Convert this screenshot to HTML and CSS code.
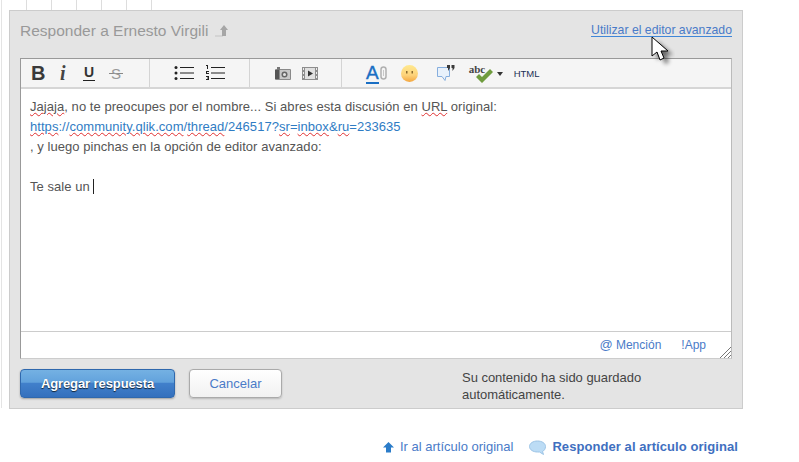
FILE: index.html

```html
<!DOCTYPE html>
<html lang="es">
<head>
  <meta charset="UTF-8">
  <title>Responder a Ernesto Virgili</title>
  <meta name="viewport" content="width=device-width, initial-scale=1.0">
  <link rel="stylesheet" href="styles.css">
</head>
<body>
  <div class="page">
    <div class="tabs">
      <span></span><span></span><span></span><span></span><span></span><span></span>
    </div>

    <div class="panel">
      <div class="panel-head">
        <h2>Responder a Ernesto Virgili
          <svg class="up-grey" width="14" height="12" viewBox="0 0 14 12"><path d="M1 10h8v2H1z" fill="#d4d4d4"/><path d="M10 0l4 5h-2v6H8V5H6z" fill="#a6a6a6"/></svg>
        </h2>
        <a class="advanced" href="#">Utilizar el editor avanzado</a>
      </div>

      <div class="editor">
        <div class="toolbar">
          <div class="tool-group group-text">
            <b class="t-bold">B</b>
            <i class="t-italic">i</i>
            <span class="t-under">U</span>
            <span class="t-strike">S</span>
          </div>
          <div class="tool-group group-list">
            <svg width="20" height="16" viewBox="0 0 20 16"><g fill="#222"><circle cx="2" cy="2.500" r="1.500"/><circle cx="2" cy="8" r="1.500"/><circle cx="2" cy="13.500" r="1.500"/><path d="M6 2h14v1H6zM6 7.500h14v1H6zM6 13h14v1H6z"/></g></svg>
            <svg width="20" height="16" viewBox="0 0 20 16"><g fill="#222"><path d="M1 0h2v4H2V1H1zM1 6h3v1H2v1h2v1H1V7h2V7H1zM1 11h3v4H1v-1h2v-.5H2v-1h1V12H1z"/><path d="M6 2h14v1H6zM6 7.500h14v1H6zM6 13h14v1H6z"/></g></svg>
          </div>
          <div class="tool-group group-media">
            <svg width="16" height="13" viewBox="0 0 16 13"><rect x="0" y="2" width="16" height="11" rx="1" fill="#8a8a8a"/><rect x="0" y="3" width="4" height="9" fill="#555"/><rect x="5" y="3" width="10" height="9" fill="#c8c8c8"/><circle cx="9.500" cy="7.500" r="3" fill="#666"/><circle cx="9.500" cy="7.500" r="1.500" fill="#e4e4e4"/><rect x="2" y="0" width="3" height="3" fill="#777"/></svg>
            <svg width="16" height="13" viewBox="0 0 16 13"><rect width="16" height="13" fill="#8e8e8e"/><rect x="3" y="1" width="10" height="11" fill="#e0e0e0"/><path d="M6 3.500l5 3-5 3z" fill="#333"/><path d="M1 1h1v2H1zM1 5h1v2H1zM1 9h1v2H1zM14 1h1v2h-1zM14 5h1v2h-1zM14 9h1v2h-1z" fill="#eee"/></svg>
          </div>
          <div class="tool-group group-extra">
            <span class="t-link">A</span>
            <svg class="clip" width="7" height="14" viewBox="0 0 7 14"><rect x="1" y="1" width="5" height="12" rx="2.500" fill="none" stroke="#b0b0b0" stroke-width="1.500"/><path d="M3.500 4v6" stroke="#c8c8c8"/></svg>
            <svg class="smiley" width="17" height="17" viewBox="0 0 17 17"><defs><linearGradient id="sm" x1="0" y1="0" x2="0" y2="1"><stop offset="0" stop-color="#ffe98f"/><stop offset=".6" stop-color="#fdd27a"/><stop offset="1" stop-color="#f3a63f"/></linearGradient></defs><circle cx="8.500" cy="8.500" r="8.500" fill="url(#sm)"/><rect x="5" y="6" width="1.500" height="2.500" fill="#8a6a30"/><rect x="10.500" y="6" width="1.500" height="2.500" fill="#8a6a30"/></svg>
            <svg class="quote" width="18" height="16" viewBox="0 0 18 16"><path d="M.5 2.500h12v9H9l-1 4-3-4H.5z" fill="#e8f1fb" stroke="#86aede"/><path d="M10 0h3v3l-2 3v-3h-1zM14.500 0h3v3l-2 3v-3h-1z" fill="#3a3a3a"/></svg>
            <span class="spell">
              <span class="spell-abc">abc</span>
              <svg class="check" width="18" height="14" viewBox="0 0 18 14"><path d="M1 8l3-3 3 3 8-8 3 3-11 11z" fill="#6f9c3e"/></svg>
              <svg class="caret-down" width="6" height="4" viewBox="0 0 6 4"><path d="M0 0h6L3 4z" fill="#333"/></svg>
            </span>
            <span class="t-html">HTML</span>
          </div>
        </div>

        <div class="body-text">
          <div><u class="typo">Jajaja</u>, no te preocupes por el nombre... Si abres esta discusión en <u class="typo">URL</u> original:</div>
          <div><a class="url" href="#"><u class="typo">https</u>://<u class="typo">community.qlik.com</u>/<u class="typo">thread</u>/246517?<u class="typo">sr</u>=<u class="typo">inbox</u>&amp;<u class="typo">ru</u>=233635</a></div>
          <div>, y luego pinchas en la opción de editor avanzado:</div>
          <div class="blank"></div>
          <div>Te sale un <span class="text-cursor"></span></div>
        </div>

        <div class="status">
          <a href="#"><span class="at">@</span> Mención</a>
          <a href="#">!App</a>
          <svg class="grip" width="11" height="11" viewBox="0 0 11 11"><path d="M0 11L11 0M4 11l7-7M8 11l3-3" stroke="#777" stroke-width="1"/></svg>
        </div>
      </div>

      <div class="actions">
        <button class="btn-primary">Agregar respuesta</button>
        <button class="btn-cancel">Cancelar</button>
        <p class="saved">Su contenido ha sido guardado automáticamente.</p>
      </div>
    </div>

    <div class="bottom-links">
      <a href="#">
        <svg width="11" height="11" viewBox="0 0 11 11"><path d="M5.500 0L11 5.500H8V10.500H3V5.500H0z" fill="#2b7cc9"/></svg>
        Ir al artículo original
      </a>
      <a class="reply-link" href="#">
        <svg width="17" height="15" viewBox="0 0 17 15"><path d="M8.500 1C13 1 16.500 3.300 16.500 6.500c0 2.500-1.500 4.300-3 5l1 3-4-2.500H8.500C4 12 .5 9.700.5 6.500S4 1 8.500 1z" fill="#bcdcf5" stroke="#9cc4e6"/></svg>
        Responder al artículo original
      </a>
    </div>

    <svg class="mouse" width="24" height="32" viewBox="0 0 24 32"><defs><filter id="ms" x="-50%" y="-50%" width="200%" height="200%"><feGaussianBlur stdDeviation="2"/></filter></defs><path d="M3 3v19l5-4 3 8 4-2-3-7h7z" fill="#000" opacity=".55" filter="url(#ms)" transform="translate(3 2)"/><path d="M1 1v19l5-4 3 8 4-2-3-7h7z" fill="#fff" stroke="#000" stroke-width="1"/></svg>
  </div>
</body>
</html>
```

FILE: styles.css

```css
* { box-sizing: border-box; }
html, body { margin: 0; padding: 0; background: #fff; }
body { font-family: "Liberation Sans", Arial, sans-serif; font-size: 13px; color: #444; overflow: hidden; }
a { color: #4a7bc8; text-decoration: none; }

.page { position: relative; width: 799px; height: 462px; padding-left: 9px; }
.page::before { content: ""; position: absolute; left: 1px; top: 0; width: 1px; height: 408px; background: #e4e4e4; }

.tabs { display: flex; height: 10px; padding-left: 17px; }
.tabs span { width: 25px; border-left: 1px solid #ddd; }
.tabs span:last-child { width: 1px; }

.panel { width: 734px; height: 399px; background: #e4e4e4; border: 1px solid #ccc; padding: 0 10px; }
.panel-head { display: flex; justify-content: space-between; height: 47px; padding-top: 9px; }
.panel-head h2 { margin: 1px 0 0; font-size: 15.500px; line-height: 20px; font-weight: normal; color: #999; }
.up-grey { vertical-align: -1px; margin-left: 1px; }
.advanced { font-size: 12.250px; line-height: 20px; height: 17px; border-bottom: 1px solid #3f86d8; }

.editor { position: relative; width: 712px; height: 301px; background: #fff; border: 1px solid #bbb; border-top-color: #999; border-left-color: #999; border-bottom-color: #ccc; }

.toolbar { display: flex; height: 30px; background: #f5f5f5; border-bottom: 2px solid #d6d6d6; }
.tool-group { display: flex; align-items: center; border-right: 1px solid #d4d4d4; height: 28px; }
.tool-group:last-child { border-right: 0; }
.group-text { width: 129px; padding-left: 10px; }
.group-list { width: 100px; padding-left: 24px; gap: 11px; }
.group-media { width: 92px; padding-left: 25px; gap: 11px; }
.group-extra { flex: 1; padding-left: 24px; }

.t-bold { width: 26px; font-size: 20px; color: #3a3a3a; }
.t-italic { width: 26px; font-family: "Liberation Serif", serif; font-size: 20px; font-weight: bold; color: #444; padding-left: 3px; }
.t-under { font-size: 14px; font-weight: bold; color: #333; border-bottom: 1px solid #222; line-height: 15px; text-align: center; width: 12px; margin: 0 13px 0 0; }
.t-strike { font-size: 15px; color: #999; width: 14px; margin-left: 1px; text-align: center; background: linear-gradient(#888, #888) center / 100% 1px no-repeat; }
.t-link { font-size: 19px; line-height: 20px; font-weight: normal; color: #1a6fc4; border-bottom: 2px solid #1a6fc4; height: 21px; -webkit-text-stroke: .4px #1a6fc4; }
.clip { margin-left: 1px; }
.smiley { margin-left: 14px; }
.quote { margin-left: 19px; }
.spell { display: flex; align-items: center; position: relative; margin-left: 14px; width: 45px; height: 20px; }
.spell-abc { position: absolute; left: 0; top: 0; font-family: "Liberation Serif", serif; font-size: 11px; font-weight: bold; line-height: 12px; color: #444; }
.check { position: absolute; left: 6px; top: 6px; }
.caret-down { position: absolute; left: 28px; top: 9px; }
.t-html { font-size: 9.500px; color: #1b2f55; margin-left: 0; }

.body-text { height: 242px; padding: 8px 9px; font-size: 13px; line-height: 20px; color: #555; letter-spacing: .05px; }
.blank { height: 20px; }
.typo { text-decoration: underline wavy #e03030 1px; text-underline-offset: 1px; }
.url { color: #2f7cc4; }
.text-cursor { display: inline-block; width: 1px; height: 15px; background: #222; vertical-align: -3px; }

.status { display: flex; justify-content: flex-end; gap: 20px; height: 27px; border-top: 1px solid #ccc; padding: 5px 25px 0 0; font-size: 12px; line-height: 16px; }
.at { font-size: 13px; }
.grip { position: absolute; right: 0; bottom: 0; }

.actions { display: flex; align-items: flex-start; padding-top: 10px; }
button { font-family: "Liberation Sans", Arial, sans-serif; height: 29px; border-radius: 4px; cursor: pointer; padding: 0; }
.btn-primary { width: 155px; font-size: 13px; letter-spacing: -.1px; font-weight: bold; color: #fff; text-shadow: 0 1px 1px #123; background: linear-gradient(#74b1e3 0, #62a2dc 45%, #4180cb 50%, #3470bd 100%); border: 1px solid #2f68ad; box-shadow: 0 1px 2px rgba(0,0,0,.3); }
.btn-cancel { width: 93px; margin-left: 14px; font-size: 13px; color: #4a7bc8; background: linear-gradient(#fff, #f1f1f1); border: 1px solid #aaa; box-shadow: 0 1px 2px rgba(0,0,0,.2); }
.saved { width: 230px; margin: 0 0 0 180px; font-size: 13px; letter-spacing: -.03px; line-height: 17px; color: #444; }

.bottom-links { display: flex; justify-content: flex-end; align-items: center; gap: 16px; width: 729px; margin-top: 29px; font-size: 13px; line-height: 18px; }
.bottom-links a { display: flex; align-items: center; gap: 6px; }
.reply-link { font-weight: bold; color: #3f6fc0; letter-spacing: .07px; }

.mouse { position: absolute; left: 651px; top: 36px; }
```
